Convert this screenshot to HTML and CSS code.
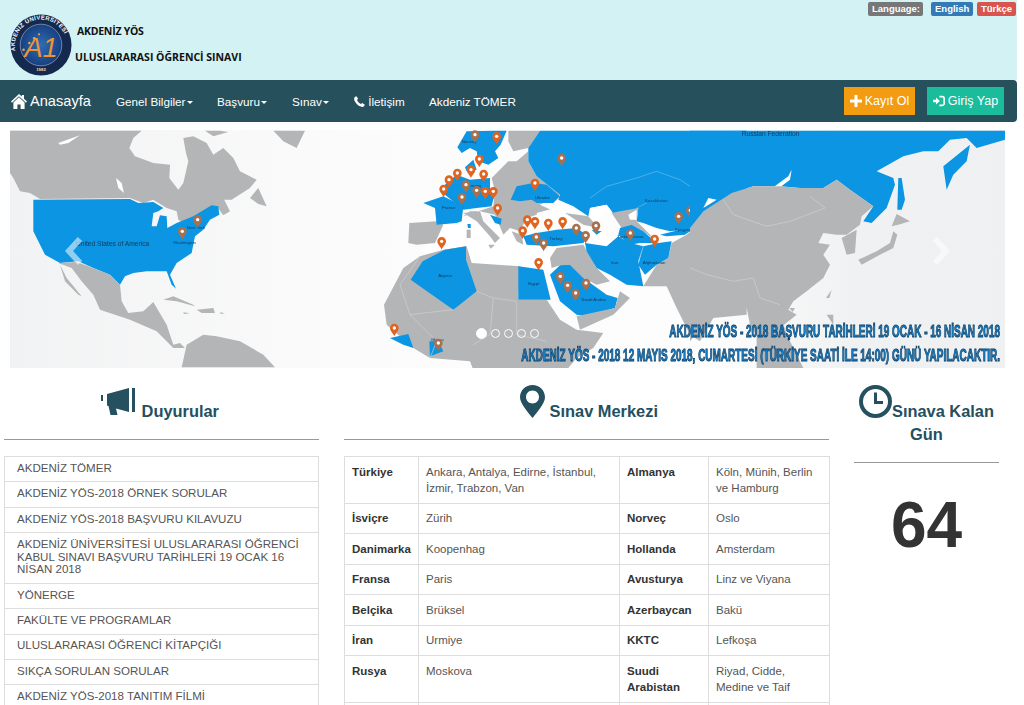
FILE: index.html
```html
<!DOCTYPE html>
<html lang="tr">
<head>
    <meta charset="UTF-8">
    <meta name="viewport" content="width=device-width, initial-scale=1.0">
    <title>Akdeniz YÖS</title>
    <link rel="stylesheet" href="styles.css">
</head>
<body>
<div class="page">
    <header class="top-bar">
        <svg class="logo" viewBox="0 0 64 64" aria-label="Akdeniz Üniversitesi">
            <defs>
                <path id="logo-arc" d="M6 40 A27 27 0 1 1 58 40"></path>
                <radialGradient id="logo-core">
                    <stop offset="0" stop-color="#2f6db4"></stop>
                    <stop offset="1" stop-color="#173f80"></stop>
                </radialGradient>
            </defs>
            <circle cx="32" cy="32" r="31.5" fill="#15294f"></circle>
            <circle cx="32" cy="32" r="21.5" fill="url(#logo-core)" stroke="#cfd8e6" stroke-width=".5"></circle>
            <text class="logo-ring"><textPath href="#logo-arc" startOffset="2%">AKDENİZ ÜNİVERSİTESİ</textPath></text>
            <text class="logo-mark" x="32" y="44">A1</text>
            <circle cx="14" cy="37" r="1.3" fill="#f0a04a"></circle>
            <circle cx="20" cy="30" r="1.3" fill="#f0a04a"></circle>
            <circle cx="25" cy="25" r="1.3" fill="#f0a04a"></circle>
            <circle cx="30" cy="21" r="1.1" fill="#f0a04a"></circle>
            <text class="logo-year" x="32" y="59">1982</text>
        </svg>
        <div class="site-title">
            <div class="title-one">AKDENİZ YÖS</div>
            <div class="title-two">ULUSLARARASI ÖĞRENCİ SINAVI</div>
        </div>
        <div class="lang-bar">
            <span class="label label-grey">Language:</span>
            <span class="label label-blue">English</span>
            <span class="label label-red">Türkçe</span>
        </div>
    </header>

    <nav class="navbar">
        <a class="brand">
            <svg class="icon-home" viewBox="0 0 16 15"><path d="M8 0 L10.8 2.6 V1 H13 V4.7 L16 7.6 L15 8.7 L8 2.3 L1 8.7 L0 7.6 Z M8 3.2 L13.6 8.4 V15 H9.6 V10.4 H6.4 V15 H2.4 V8.4 Z" fill="#fff"></path></svg>
            Anasayfa
        </a>
        <a class="nav-link link-genel">Genel Bilgiler<span class="caret"></span></a>
        <a class="nav-link link-basvuru">Başvuru<span class="caret"></span></a>
        <a class="nav-link link-sinav">Sınav<span class="caret"></span></a>
        <a class="nav-link link-iletisim">
            <svg class="icon-phone" viewBox="0 0 12 12"><path d="M2.6 0.2 L4.5 3 L3.3 4.4 C3.7 5.8 5.6 8 7.5 8.7 L9 7.5 L11.8 9.5 C11.5 10.8 10.2 12 9 11.9 C4.8 11.5 0.4 7 0.1 3 C0 1.8 1.3 0.5 2.6 0.2 Z" fill="#fff"></path></svg>
            İletişim
        </a>
        <a class="nav-link link-tomer">Akdeniz TÖMER</a>
        <div class="nav-buttons">
            <a class="btn btn-orange">
                <svg class="icon-btn" viewBox="0 0 12 12"><path d="M4.5 0 H7.5 V4.5 H12 V7.5 H7.5 V12 H4.5 V7.5 H0 V4.5 H4.5 Z" fill="#fff"></path></svg>
                Kayıt Ol
            </a>
            <a class="btn btn-green">
                <svg class="icon-btn" viewBox="0 0 14 12"><path d="M0 4.5 H3.5 V1.8 L8 6 L3.5 10.2 V7.5 H0 Z M7.5 0 H11 C12.8 0 14 1.3 14 3 V9 C14 10.7 12.8 12 11 12 H7.5 V10.2 H10.8 C11.6 10.2 12.1 9.7 12.1 9 V3 C12.1 2.3 11.6 1.8 10.8 1.8 H7.5 Z" fill="#fff"></path></svg>
                Giriş Yap
            </a>
        </div>
    </nav>

    <section class="carousel">
        <svg class="map" viewBox="0 0 995 238">
            <defs>
                <linearGradient id="sea" x1="0" x2="1" y1="0" y2="0">
                    <stop offset="0" stop-color="#f1f2f3"></stop>
                    <stop offset="0.33" stop-color="#fbfbfb"></stop>
                    <stop offset="0.7" stop-color="#fdfdfd"></stop>
                    <stop offset="0.85" stop-color="#f0f1f2"></stop>
                    <stop offset="1" stop-color="#eff0f1"></stop>
                </linearGradient>
                <g id="pin">
                    <path d="M0 0 C-3 -9 -13 -15 -13 -25 A13 13 0 1 1 13 -25 C13 -15 3 -9 0 0 Z"></path>
                    <circle cx="0" cy="-25" r="5" fill="#fff"></circle>
                </g>
            </defs>
            <rect width="995" height="238" fill="url(#sea)"></rect>

            <!-- amerika -->
            <g transform="translate(0 -2) scale(.3333)">
                <polygon class="grey" points="0,8 395,8 370,30 358,60 375,85 430,105 480,110 478,150 505,185 520,165 535,100 528,75 520,30 550,25 590,45 610,80 640,60 670,90 690,130 740,155 720,180 665,215 610,215 640,210 660,250 640,262 620,235 600,240 570,262 520,285 505,275 500,250 470,240 430,215 400,225 360,210 90,213 60,195 30,190 10,150 0,135"></polygon>
                <polygon class="sea-white" points="145,45 210,22 175,45 150,50"></polygon>
                <polygon class="sea-white" points="318,150 335,165 342,195 325,180"></polygon>
                <polygon class="grey" points="720,210 745,180 770,235 745,228"></polygon>
                <polygon class="grey" points="790,8 885,8 860,60 820,40"></polygon>
                <polygon class="grey" points="585,8 630,8 655,12 610,25"></polygon>
                <polygon class="blue" points="70,215 360,213 385,225 430,222 460,240 445,250 430,255 425,295 440,295 450,262 470,265 472,300 500,285 550,265 605,232 625,235 628,260 600,275 580,305 555,325 545,375 500,405 480,440 498,482 485,470 470,430 410,430 370,435 345,445 330,470 300,440 250,420 205,400 150,405 105,380 70,310"></polygon>
                <polygon class="grey" points="145,405 200,402 250,420 300,440 330,470 335,520 355,555 400,550 430,522 470,590 490,650 510,645 525,660 490,660 440,610 360,575 270,545 250,500 215,460 185,420"></polygon>
                <polygon class="grey" points="150,410 170,450 215,505 205,500 165,460"></polygon>
                <polygon class="grey" points="515,718 530,650 580,620 620,625 690,640 760,680 795,718"></polygon>
                <polygon class="grey" points="460,515 490,505 550,530 555,535 500,520"></polygon>
                <polygon class="grey" points="560,545 610,540 615,555 575,555"></polygon>
                <polygon class="grey" points="520,553 540,556 522,558"></polygon>
                <polygon class="grey" points="630,553 645,556 632,558"></polygon>
                <text class="map-label big" x="198" y="354">United States of America</text>
                <text class="map-label" x="490" y="348">Washington</text>
                <text class="map-label" x="530" y="304">New York</text>
                <g class="pin-brown">
                    <use href="#pin" x="563" y="300"></use><use href="#pin" x="517" y="335"></use>
                </g>
            </g>

            <!-- avrupa, afrika, orta dogu -->
            <g transform="translate(370 -2) scale(.3333)">
                <polygon class="sea-white" points="120,370 190,290 290,280 430,300 520,360 510,420 270,410"></polygon>
                <polygon class="grey" points="12,530 70,420 120,385 190,365 260,355 275,405 420,415 415,515 500,515 540,575 590,605 670,615 640,660 590,690 560,726 280,726 270,700 150,690 100,660 20,590"></polygon>
                <polygon class="grey" points="88,285 170,280 190,290 165,345 110,350 85,345"></polygon>
                <polygon class="grey" points="385,8 480,8 445,60 400,70 385,40"></polygon>
                <polygon class="grey" points="335,150 385,100 410,100 445,70 445,100 470,145 540,200 480,230 545,260 470,260 440,270 420,310 390,300 370,320 345,260 300,250 270,250 250,265 340,235 345,190"></polygon>
                <polygon class="grey" points="250,255 300,250 310,280 360,330 345,345 330,325 290,280"></polygon>
                <polygon class="grey" points="325,350 345,350 332,362"></polygon>
                <polygon class="grey" points="260,305 272,305 272,330 260,330"></polygon>
                <polygon class="blue" points="262,288 272,288 272,300 264,300"></polygon>
                <polygon class="grey" points="395,310 425,320 430,350 410,340"></polygon>
                <polygon class="blue" points="232,58 260,10 340,8 380,8 362,50 345,70 355,90 325,110 295,100 290,70 270,60 245,75"></polygon>
                <polygon class="blue" points="255,118 280,95 290,125 260,130"></polygon>
                <polygon class="blue" points="195,170 230,140 270,155 330,150 330,185 345,190 335,235 290,240 250,245 195,200"></polygon>
                <polygon class="blue" points="130,225 190,205 250,235 245,280 230,285 170,290 165,240"></polygon>
                <polygon class="blue" points="330,260 365,272 362,290 345,285"></polygon>
                <polygon class="blue" points="392,215 410,175 460,165 500,170 540,205 520,225 470,225 455,215 420,220"></polygon>
                <polygon class="blue" points="480,8 1100,8 1100,200 1000,240 990,265 950,300 870,310 830,300 790,285 770,280 775,240 720,260 725,290 695,250 680,230 630,240 625,265 580,235 535,215 540,200 470,145 445,100 445,60"></polygon>
                <polygon class="sea-white" points="470,255 545,235 555,250 590,290 530,300 480,300"></polygon>
                <polygon class="sea-white" points="630,240 680,230 695,250 655,270 665,300 700,350 650,350 625,315"></polygon>
                <polygon class="grey" points="555,255 625,265 655,300 610,290"></polygon>
                <polygon class="grey" points="695,255 720,250 775,240 770,280 830,340 790,310 755,290 725,300"></polygon>
                <polygon class="sea-white" points="745,260 770,245 770,275 750,275"></polygon>
                <polygon class="blue" points="720,300 755,290 790,310 830,345 800,345 780,345 750,350 715,320"></polygon>
                <polygon class="blue" points="840,320 900,305 945,300 915,320 860,325"></polygon>
                <polygon class="grey" points="510,390 530,360 610,350 650,420 690,460 650,470 610,450 570,410 540,412 515,420"></polygon>
                <polygon class="blue" points="430,325 470,315 530,305 590,300 625,325 610,345 520,355 440,350"></polygon>
                <polygon class="blue" points="635,305 665,310 650,320"></polygon>
                <polygon class="blue" points="615,345 650,350 680,355 715,325 750,345 790,355 775,400 790,475 740,470 690,440 650,420 620,370"></polygon>
                <polygon class="grey" points="790,475 830,410 865,390 875,345 920,320 990,265 1100,200 1100,560 1000,570 960,640 930,620 890,540 860,475"></polygon>
                <polygon class="blue" points="790,355 835,345 875,340 865,390 830,410 795,440 775,410"></polygon>
                <polygon class="blue" points="128,400 195,365 258,355 258,395 290,490 220,545 92,455"></polygon>
                <polygon class="blue" points="415,415 490,425 512,515 415,515"></polygon>
                <polygon class="blue" points="510,440 540,412 570,410 610,450 680,500 713,510 705,540 620,565 590,560 540,520"></polygon>
                <polygon class="grey" points="590,565 705,540 720,490 750,510 700,560 600,605"></polygon>
                <polygon class="blue" points="30,630 85,618 100,660 70,650 40,635"></polygon>
                <polygon class="blue" points="148,640 175,640 190,670 150,685"></polygon>
                <polyline class="line-grey" points="120,385 60,470 90,560 170,640 150,690"></polyline>
                <polyline class="line-grey" points="290,490 340,510 410,520 410,620 500,640"></polyline>
                <polyline class="line-grey" points="340,510 330,620 280,650"></polyline>
                <polyline class="line-grey" points="90,560 220,545"></polyline>
                <polyline class="line-blue" points="630,210 680,175 770,150 830,130 900,155 960,195 990,225"></polyline>
                <polyline class="line-blue" points="770,240 800,225"></polyline>
                <polyline class="line-blue" points="790,355 775,400"></polyline>
                <text class="map-label" x="245" y="44">Norway</text>
                <text class="map-label" x="465" y="214">Ukraine</text>
                <text class="map-label" x="186" y="244">France</text>
                <text class="map-label" x="250" y="177">Germany</text>
                <text class="map-label" x="175" y="446">Algeria</text>
                <text class="map-label" x="445" y="472">Egypt</text>
                <text class="map-label" x="508" y="336">Turkey</text>
                <text class="map-label" x="693" y="408">Iran</text>
                <text class="map-label" x="788" y="407">Afghanistan</text>
                <text class="map-label" x="795" y="222">Kazakhstan</text>
                <text class="map-label" x="712" y="329">Turkmenistan</text>
                <text class="map-label" x="604" y="518">Saudi Arabia</text>
                <text class="map-label" x="152" y="640">Ghana</text>
                <text class="map-label" x="885" y="308">Kyrgyzstan</text>
                <g class="pin-orange">
                    <use href="#pin" x="350" y="50"></use><use href="#pin" x="298" y="118"></use>
                    <use href="#pin" x="273" y="150"></use><use href="#pin" x="311" y="163"></use>
                    <use href="#pin" x="207" y="180"></use><use href="#pin" x="232" y="160"></use>
                    <use href="#pin" x="191" y="208"></use><use href="#pin" x="316" y="215"></use>
                    <use href="#pin" x="340" y="215"></use><use href="#pin" x="353" y="265"></use>
                    <use href="#pin" x="185" y="365"></use><use href="#pin" x="465" y="190"></use>
                    <use href="#pin" x="442" y="300"></use><use href="#pin" x="465" y="305"></use>
                    <use href="#pin" x="505" y="310"></use><use href="#pin" x="548" y="305"></use>
                    <use href="#pin" x="428" y="333"></use><use href="#pin" x="824" y="358"></use>
                    <use href="#pin" x="476" y="428"></use><use href="#pin" x="43" y="625"></use>
                </g>
                <g class="pin-brown">
                    <use href="#pin" x="285" y="45"></use><use href="#pin" x="258" y="195"></use>
                    <use href="#pin" x="290" y="212"></use><use href="#pin" x="246" y="232"></use>
                    <use href="#pin" x="545" y="115"></use><use href="#pin" x="469" y="352"></use>
                    <use href="#pin" x="491" y="370"></use><use href="#pin" x="589" y="325"></use>
                    <use href="#pin" x="617" y="347"></use><use href="#pin" x="648" y="318"></use>
                    <use href="#pin" x="751" y="340"></use><use href="#pin" x="896" y="290"></use>
                    <use href="#pin" x="931" y="272"></use><use href="#pin" x="541" y="470"></use>
                    <use href="#pin" x="563" y="497"></use><use href="#pin" x="618" y="490"></use>
                    <use href="#pin" x="587" y="520"></use><use href="#pin" x="175" y="670"></use>
                </g>
            </g>

            <!-- dogu asya -->
            <g transform="translate(680 -2) scale(.3333)">
                <polygon class="blue" points="0,8 945,8 945,35 860,60 830,30 780,35 745,70 700,70 640,85 560,130 610,150 615,170 590,240 545,285 520,280 550,235 515,210 480,185 440,155 400,180 330,180 270,175 190,175 125,195 90,205 60,215 40,245 0,290"></polygon>
                <polygon class="sea-white" points="250,178 295,145 305,125 300,155 270,178"></polygon>
                <polygon class="sea-white" points="55,210 80,215 40,240"></polygon>
                <polygon class="blue" points="760,115 840,50 830,100 790,140 770,185"></polygon>
                <polygon class="blue" points="625,150 635,150 645,215 635,245 622,245"></polygon>
                <polygon class="grey" points="0,300 40,250 125,195 190,175 270,175 330,180 400,180 440,155 480,185 550,235 515,265 510,290 470,320 440,320 400,315 385,345 420,350 400,380 420,410 400,450 350,490 310,520 295,545 320,560 270,600 260,650 210,640 180,590 170,540 130,510 60,570 0,640"></polygon>
                <polygon class="grey" points="200,600 280,590 300,640 340,720 200,720"></polygon>
                <polygon class="grey" points="455,330 500,305 495,375 470,380"></polygon>
                <polygon class="grey" points="505,395 560,370 600,345 610,310 622,320 610,360 570,380 515,410"></polygon>
                <polygon class="grey" points="605,295 620,258 660,280 625,290"></polygon>
                <polygon class="grey" points="408,510 425,485 418,510"></polygon>
                <polygon class="grey" points="298,540 315,540 308,552"></polygon>
                <polygon class="grey" points="410,560 430,560 430,590"></polygon>
                <polyline class="line-grey" points="100,215 130,260 230,295 300,280 405,240 360,205"></polyline>
                <polyline class="line-grey" points="0,420 50,440 130,460 190,450 210,510 270,530"></polyline>
                <text class="map-label big" x="155" y="24">Russian Federation</text>
            </g>

            <text class="map-banner" transform="translate(990 207) scale(.604 1)">AKDENİZ YÖS - 2018 BAŞVURU TARİHLERİ 19 OCAK - 16 NİSAN 2018</text>
            <text class="map-banner" transform="translate(990 231) scale(.605 1)">AKDENİZ YÖS - 2018 12 MAYIS 2018, CUMARTESİ (TÜRKİYE SAATİ İLE 14:00) GÜNÜ YAPILACAKTIR.</text>
        </svg>

        <svg class="arrow arrow-left" viewBox="0 0 20 30"><path d="M16 3 L5 15 L16 27"></path></svg>
        <svg class="arrow arrow-right" viewBox="0 0 20 30"><path d="M4 3 L15 15 L4 27"></path></svg>
        <ol class="indicators">
            <li class="active"></li>
            <li></li>
            <li></li>
            <li></li>
            <li></li>
        </ol>
    </section>

    <main class="columns">
        <section class="col">
            <h3 class="col-title title-notice">
                <svg class="icon-title icon-horn" viewBox="0 0 37 28"><path d="M0 7 H2 V13 H0 Z M6 6 L28 0 V24 L15 20.5 L16.5 27 H9.5 L7.5 18 L6 17.5 Z M31 0 H34 V24 H31 Z" fill="#24505f"></path></svg>
                Duyurular
            </h3>
            <hr class="rule">
            <ul class="notice-list">
                <li>AKDENİZ TÖMER</li>
                <li>AKDENİZ YÖS-2018 ÖRNEK SORULAR</li>
                <li>AKDENİZ YÖS-2018 BAŞVURU KILAVUZU</li>
                <li>AKDENİZ ÜNİVERSİTESİ ULUSLARARASI ÖĞRENCİ KABUL SINAVI BAŞVURU TARİHLERİ 19 OCAK 16 NİSAN 2018</li>
                <li>YÖNERGE</li>
                <li>FAKÜLTE VE PROGRAMLAR</li>
                <li>ULUSLARARASI ÖĞRENCİ KİTAPÇIĞI</li>
                <li>SIKÇA SORULAN SORULAR</li>
                <li>AKDENİZ YÖS-2018 TANITIM FİLMİ</li>
            </ul>
        </section>

        <section class="col">
            <h3 class="col-title">
                <svg class="icon-title icon-pin" viewBox="0 0 25 33"><path fill-rule="evenodd" d="M12.5 0 C19.4 0 25 5.4 25 12.2 C25 18.5 17 27 12.5 33 C8 27 0 18.5 0 12.2 C0 5.4 5.6 0 12.5 0 Z M12.5 5.5 C8.8 5.5 6 8.4 6 12 C6 15.6 8.8 18.5 12.5 18.5 C16.2 18.5 19 15.6 19 12 C19 8.4 16.2 5.5 12.5 5.5 Z" fill="#24505f"></path></svg>
                Sınav Merkezi
            </h3>
            <hr class="rule">
            <table class="center-table">
                <colgroup>
                    <col class="c-country"><col class="c-city"><col class="c-country2"><col class="c-city2">
                </colgroup>
                <tr><th>Türkiye</th><td>Ankara, Antalya, Edirne, İstanbul, İzmir, Trabzon, Van</td><th>Almanya</th><td>Köln, Münih, Berlin ve Hamburg</td></tr>
                <tr><th>İsviçre</th><td>Zürih</td><th>Norveç</th><td>Oslo</td></tr>
                <tr><th>Danimarka</th><td>Koopenhag</td><th>Hollanda</th><td>Amsterdam</td></tr>
                <tr><th>Fransa</th><td>Paris</td><th>Avusturya</th><td>Linz ve Viyana</td></tr>
                <tr><th>Belçika</th><td>Brüksel</td><th>Azerbaycan</th><td>Bakü</td></tr>
                <tr><th>İran</th><td>Urmiye</td><th>KKTC</th><td>Lefkoşa</td></tr>
                <tr><th>Rusya</th><td>Moskova</td><th>Suudi Arabistan</th><td>Riyad, Cidde, Medine ve Taif</td></tr>
                <tr><th>&nbsp;</th><td></td><th></th><td></td></tr>
            </table>
        </section>

        <section class="col">
            <h3 class="col-title title-count">
                <svg class="icon-title icon-clock" viewBox="0 0 33 33"><circle cx="16.5" cy="16.5" r="14.5" fill="none" stroke="#24505f" stroke-width="4"></circle><path d="M15 7.5 H18 V16 H24 V19 H15 Z" fill="#24505f"></path></svg>Sınava Kalan Gün
            </h3>
            <hr class="rule">
            <div class="days-left">64</div>
        </section>
    </main>
</div>
</body>
</html>
```

FILE: styles.css
```css
html, body {
    height: 100%;
}

body {
    margin: 0;
    font-family: "Liberation Sans", Arial, sans-serif;
    color: #333;
    background-color: #fff;
    overflow: hidden;
}

.page {
    width: 1017px;
}

/* ust bant */
.top-bar {
    display: flex;
    height: 80px;
    background-color: #d2f2f3;
    box-sizing: border-box;
    padding: 14px 1px 0 10px;
}

.logo {
    width: 62px;
    height: 62px;
    flex: none;
}

.logo-ring {
    font-size: 6px;
    font-weight: bold;
    fill: #fff;
    letter-spacing: .4px;
}

.logo-mark {
    font-size: 28px;
    font-style: italic;
    fill: #ee9434;
    text-anchor: middle;
}

.logo-year {
    font-size: 4.5px;
    font-weight: bold;
    fill: #f3d9a8;
    text-anchor: middle;
}

.site-title {
    font-family: "Open Sans", sans-serif;
    font-weight: 700;
    font-size: 10.5px;
    color: #111;
    margin-left: 3px;
}

.title-one {
    margin: 10px 0 0 2px;
    line-height: 15px;
    letter-spacing: -.25px;
}

.title-two {
    margin-top: 11px;
    line-height: 15px;
}

.lang-bar {
    margin: -12px 0 0 auto;
    display: flex;
    align-self: flex-start;
}

.label {
    font-size: 9.5px;
    font-weight: bold;
    color: #fff;
    line-height: 14px;
    border-radius: 2px;
    padding: 0 4px;
    text-align: center;
}

.label-grey {
    background-color: #777;
    width: 47px;
    margin-right: 8px;
}

.label-blue {
    background-color: #337ab7;
    width: 34px;
    margin-right: 4px;
}

.label-red {
    background-color: #d9534f;
    width: 31px;
}

/* menu */
.navbar {
    display: flex;
    align-items: center;
    height: 42px;
    background-color: #27505d;
    border-radius: 0 4px 4px 0;
    color: #fff;
    font-size: 11.7px;
}

.brand {
    display: flex;
    align-items: center;
    gap: 3px;
    font-size: 14.6px;
    margin-left: 11px;
    width: 105px;
    flex: none;
}

.icon-home {
    width: 16px;
    height: 15px;
}

.nav-link {
    flex: none;
}

.link-genel { width: 101px; }
.link-basvuru { width: 75px; }
.link-sinav { width: 62px; }
.link-iletisim { width: 75px; }

.caret {
    display: inline-block;
    margin-left: 1px;
    vertical-align: middle;
    border-top: 3px solid #fff;
    border-left: 3px solid transparent;
    border-right: 3px solid transparent;
}

.icon-phone {
    width: 11px;
    height: 11px;
    vertical-align: -1px;
}

.nav-buttons {
    display: flex;
    gap: 12px;
    margin: 0 13px 0 auto;
}

.btn {
    display: flex;
    align-items: center;
    justify-content: center;
    gap: 3px;
    height: 28px;
    font-size: 12.5px;
}

.btn-orange {
    background-color: #f39c12;
    width: 71px;
}

.btn-green {
    background-color: #1abc9c;
    width: 77px;
}

.icon-btn {
    width: 12px;
    height: 12px;
}

/* harita */
.carousel {
    position: relative;
    width: 995px;
    height: 238px;
    margin: 8px 0 0 10px;
}

.map {
    display: block;
    width: 995px;
    height: 238px;
    filter: blur(.35px);
}

.sea-white { fill: #fff; }
.grey { fill: #b4b5b7; }
.blue { fill: #0b95e2; }
.line-grey { fill: none; stroke: #cfd0d2; stroke-width: 2; }
.line-blue { fill: none; stroke: #6cbcea; stroke-width: 2; }
.pin-orange { fill: #e0631f; }
.pin-brown { fill: #a9704e; }

.map-label {
    font-size: 13px;
    fill: #123a5c;
}

.map-label.big {
    font-size: 20px;
}

.map-banner {
    font-size: 16.5px;
    font-weight: bold;
    fill: #1a86d0;
    stroke: #0c3f66;
    stroke-width: .9px;
    text-anchor: end;
}

.arrow {
    position: absolute;
    top: 106px;
    width: 20px;
    height: 30px;
    fill: none;
    stroke: rgba(255, 255, 255, .55);
    stroke-width: 6;
}

.arrow-left { left: 54px; }
.arrow-right { right: 54px; }

.indicators {
    position: absolute;
    left: 0;
    right: 0;
    bottom: 29px;
    display: flex;
    justify-content: center;
    align-items: center;
    gap: 4px;
    margin: 0;
    padding: 0;
    list-style: none;
}

.indicators li {
    width: 7px;
    height: 7px;
    border: 1px solid #fff;
    border-radius: 50%;
}

.indicators li.active {
    width: 9px;
    height: 9px;
    background-color: #fff;
}

/* alt kolonlar */
.columns {
    display: grid;
    grid-template-columns: 315px 485px 145px;
    column-gap: 25px;
    padding-left: 4px;
}

.col-title {
    margin: 17px 0 0;
    height: 54px;
    box-sizing: border-box;
    text-align: center;
    font-size: 16.4px;
    font-weight: bold;
    line-height: 23px;
    color: #24505f;
}

.title-notice {
    padding-right: 3px;
}

.title-count {
    height: 77px;
}

.icon-title {
    display: inline-block;
    vertical-align: -1px;
}

.icon-horn {
    width: 37px;
    height: 28px;
    margin: 3px -1px 2px 0;
}

.icon-pin {
    width: 25px;
    height: 33px;
    margin-left: 5px;
}

.icon-clock {
    width: 33px;
    height: 33px;
}

.rule {
    margin: 0 0 16px;
    border: 0;
    border-top: 1px solid #999;
}

.notice-list {
    margin: 0;
    padding: 0;
    list-style: none;
    border: 1px solid #ddd;
    border-top: 0;
    font-size: 11.55px;
    line-height: 12.6px;
    color: #555;
}

.notice-list li {
    padding: 4.8px 12px 7px;
    border-top: 1px solid #ddd;
}

.center-table {
    width: 485px;
    table-layout: fixed;
    border-collapse: collapse;
    font-size: 11.5px;
    line-height: 16.3px;
}

.c-country { width: 74px; }
.c-city { width: 201px; }
.c-country2 { width: 89px; }
.c-city2 { width: 121px; }

.center-table th,
.center-table td {
    border: 1px solid #ddd;
    padding: 6.6px 7px;
    vertical-align: top;
    text-align: left;
}

.center-table th {
    color: #333;
}

.center-table td {
    color: #555;
}

.days-left {
    text-align: center;
    font-size: 64px;
    font-weight: bold;
    line-height: 74px;
    margin-top: 25px;
}
```
